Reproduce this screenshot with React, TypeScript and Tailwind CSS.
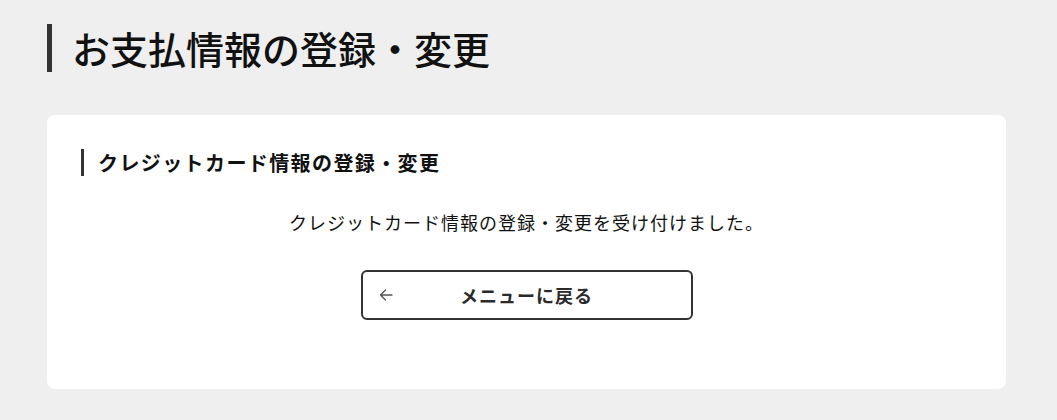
import React from "react";

export default function App() {
  return (
    <div
      className="w-[1057px] h-[420px] bg-[#efefef] text-[#1a1a1a] overflow-hidden"
      style={{ fontFamily: '"Noto Sans CJK JP", "Noto Sans", sans-serif' }}
    >
      <div className="pt-[24px] pl-[47px]">
        <h1 className="border-l-[5px] border-[#333333] pl-[20px] h-[48px] flex items-center text-[38px] leading-[48px] font-medium tracking-[0px] text-[#111]">
          お支払情報の登録・変更
        </h1>
      </div>
      <div className="mt-[43px] ml-[47px] w-[959px] h-[274px] bg-white rounded-[8px] pt-[34px] px-[34px]">
        <h2 className="border-l-[3px] border-[#333333] pl-[14px] h-[27px] flex items-center text-[20px] font-bold tracking-[1.4px] leading-[27px] text-[#111]">
          クレジットカード情報の登録・変更
        </h2>
        <p className="mt-[34px] text-center text-[18px] leading-[24px] tracking-[1px] text-[#111]">
          クレジットカード情報の登録・変更を受け付けました。
        </p>
        <div className="mt-[36px] flex justify-center">
          <button className="relative w-[332px] h-[50px] border-2 border-[#333333] rounded-[6px] bg-white flex items-center justify-center text-[18px] font-bold tracking-[1px] text-[#2a2a2a]">
            <svg
              className="absolute left-[16px] top-1/2 -translate-y-1/2"
              width="14"
              height="14"
              viewBox="0 0 14 14"
              fill="none"
              stroke="#555"
              strokeWidth="1.3"
              strokeLinecap="round"
              strokeLinejoin="round"
            >
              <path d="M13 7H1.5M6.5 2L1.5 7l5 5" />
            </svg>
            メニューに戻る
          </button>
        </div>
      </div>
    </div>
  );
}
